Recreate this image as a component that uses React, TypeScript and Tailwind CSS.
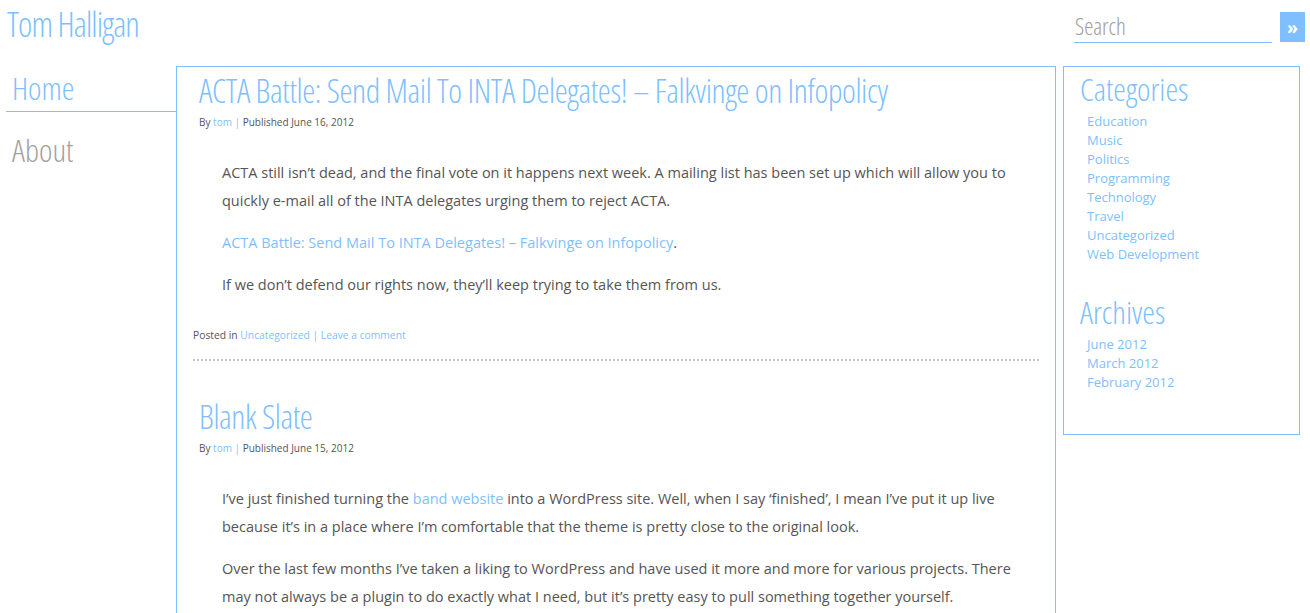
const blue = "text-[#80bfff]";

const Meta = ({ date }: { date: string }) => (
  <p className="text-[10px] text-[#555] mt-[8px]">
    By <a className={blue}>tom</a> <span className={blue}>|</span> Published {date}
  </p>
);

const categories = [
  "Education",
  "Music",
  "Politics",
  "Programming",
  "Technology",
  "Travel",
  "Uncategorized",
  "Web Development",
];

const archives = ["June 2012", "March 2012", "February 2012"];

const heading = "font-['Open_Sans'] font-light font-stretch-condensed";

export default function App() {
  return (
    <div className="font-['Open_Sans',sans-serif] text-[#555] bg-white min-h-screen">
      {/* header */}
      <div className="flex justify-between items-start h-[66px]">
        <h1 className={`${heading} ${blue} text-[34px] tracking-[-0.9px] leading-none pl-[7px] pt-[7px]`}>
          Tom Halligan
        </h1>
        <div className="flex items-start gap-2 pt-3 pr-[5px]">
          <div className="w-[198px] border-b border-[#80bfff] h-[31px] flex items-end">
            <span className={`${heading} text-[23px] leading-none text-[#a09c98] pl-[1px] pb-[4px]`}>
              Search
            </span>
          </div>
          <button className="w-[25px] h-[30px] bg-[#80bfff] text-white text-[18px] leading-none flex items-center justify-center font-bold">
            »
          </button>
        </div>
      </div>

      <div className="flex items-start">
        {/* nav */}
        <nav className="w-[170px] ml-[6px] shrink-0">
          <div className="border-b border-[#80bfff] h-[46px] flex items-end pb-[7px]">
            <a className={`${heading} ${blue} text-[32px] leading-none pl-[6px]`}>Home</a>
          </div>
          <div className="pt-[22px]">
            <a className={`${heading} text-[#a5a19e] text-[32px] leading-none pl-[6px]`}>About</a>
          </div>
        </nav>

        {/* main */}
        <main className="w-[880px] shrink-0 border border-[#80bfff] px-4 pb-10">
          <article className="border-b-2 border-dotted border-[#c4c4c4] pb-[16px]">
            <h2 className={`${heading} ${blue} text-[33px] tracking-[-0.4px] leading-none pl-[6px] pt-[7px]`}>
              ACTA Battle: Send Mail To INTA Delegates! – Falkvinge on Infopolicy
            </h2>
            <div className="pl-[6px]">
              <Meta date="June 16, 2012" />
            </div>
            <div className="pl-[29px] pr-[20px] pt-[29px] text-[14.5px] leading-[28px] flex flex-col gap-[14px]">
              <p>
                ACTA still isn’t dead, and the final vote on it happens next week. A mailing list has
                been set up which will allow you to quickly e-mail all of the INTA delegates urging
                them to reject ACTA.
              </p>
              <p>
                <a className={blue}>ACTA Battle: Send Mail To INTA Delegates! – Falkvinge on Infopolicy</a>.
              </p>
              <p>If we don’t defend our rights now, they’ll keep trying to take them from us.</p>
            </div>
            <p className="text-[10.3px] mt-[29px]">
              Posted in <a className={blue}>Uncategorized</a> <span className={blue}>|</span>{" "}
              <a className={blue}>Leave a comment</a>
            </p>
          </article>

          <article className="pt-[39px]">
            <h2 className={`${heading} ${blue} text-[33px] tracking-[-0.4px] leading-none pl-[6px]`}>
              Blank Slate
            </h2>
            <div className="pl-[6px]">
              <Meta date="June 15, 2012" />
            </div>
            <div className="pl-[29px] pr-[20px] pt-[29px] text-[14.5px] leading-[28px] flex flex-col gap-[14px]">
              <p>
                I’ve just finished turning the <a className={blue}>band website</a> into a WordPress
                site. Well, when I say ‘finished’, I mean I’ve put it up live because it’s in a place
                where I’m comfortable that the theme is pretty close to the original look.
              </p>
              <p>
                Over the last few months I’ve taken a liking to WordPress and have used it more and
                more for various projects. There may not always be a plugin to do exactly what I need,
                but it’s pretty easy to pull something together yourself.
              </p>
              <p>
                The theme itself is a fairly simple one, but it was a good way to learn how everything
                fits together.
              </p>
            </div>
          </article>
        </main>

        {/* sidebar */}
        <aside className="w-[237px] shrink-0 ml-[7px] border border-[#80bfff] pl-[16px] pt-[3px] pb-[42px]">
          <h3 className={`${heading} ${blue} text-[32px] leading-[1.2]`}>Categories</h3>
          <ul className="pl-[7px] pt-[4px] text-[13px] leading-[19px]">
            {categories.map((c) => (
              <li key={c} className={blue}>
                {c}
              </li>
            ))}
          </ul>
          <h3 className={`${heading} ${blue} text-[32px] leading-[1.2] pt-[29px]`}>Archives</h3>
          <ul className="pl-[7px] pt-[3px] text-[13px] leading-[19px]">
            {archives.map((a) => (
              <li key={a} className={blue}>
                {a}
              </li>
            ))}
          </ul>
        </aside>
      </div>
    </div>
  );
}
